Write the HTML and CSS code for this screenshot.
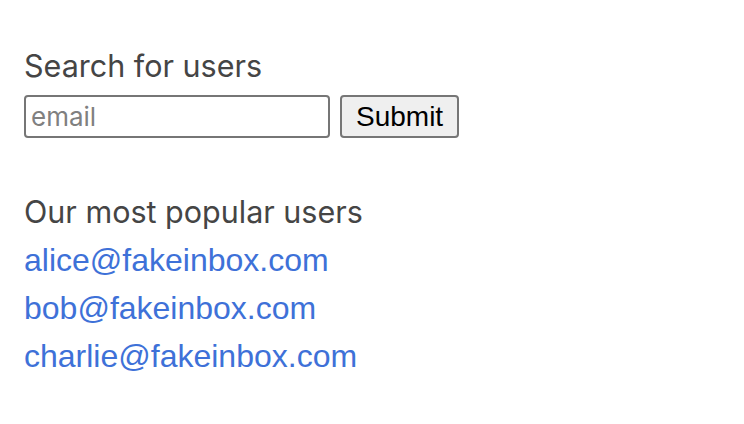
FILE: index.html
```html
<!DOCTYPE html>
<html>
<head>
<meta charset="utf-8">
<link rel="stylesheet" href="styles.css">
</head>
<body>
<main class="page">
  <section class="search">
    <div class="label">Search for users</div>
    <form class="form">
      <input class="field" type="text" placeholder="email">
      <button class="submit" type="button">Submit</button>
    </form>
  </section>
  <section class="popular">
    <div class="label">Our most popular users</div>
    <ul class="users">
      <li><a href="#">alice@fakeinbox.com</a></li>
      <li><a href="#">bob@fakeinbox.com</a></li>
      <li><a href="#">charlie@fakeinbox.com</a></li>
    </ul>
  </section>
</main>
</body>
</html>
```
FILE: styles.css
```css
html, body {
  margin: 0;
  padding: 0;
  background: #fff;
}
.page {
  padding: 42px 24px;
  font-family: Inter, "Liberation Sans", sans-serif;
}
.label {
  font-size: 30.5px;
  line-height: 48px;
  color: #454545;
}
.form {
  display: flex;
  gap: 10px;
  margin: 5px 0 0 0;
}
.field {
  box-sizing: border-box;
  width: 306px;
  height: 43px;
  border: 2px solid #767676;
  border-radius: 4px;
  padding: 0 5px;
  font-family: Inter, sans-serif;
  font-size: 26px;
  color: #000;
}
.field::placeholder {
  color: #808080;
}
.submit {
  box-sizing: border-box;
  height: 43px;
  padding: 0 14px;
  border: 2px solid #767676;
  border-radius: 4px;
  background: #efefef;
  font-family: "Liberation Sans", Arial, sans-serif;
  font-size: 28px;
  color: #000;
}
.popular {
  margin-top: 50px;
}
.users {
  list-style: none;
  margin: 0;
  padding: 0;
}
.users li {
  line-height: 48px;
  font-size: 32px;
  font-family: "Liberation Sans", Arial, sans-serif;
}
.users a {
  color: #3e71d8;
  text-decoration: none;
}
```
